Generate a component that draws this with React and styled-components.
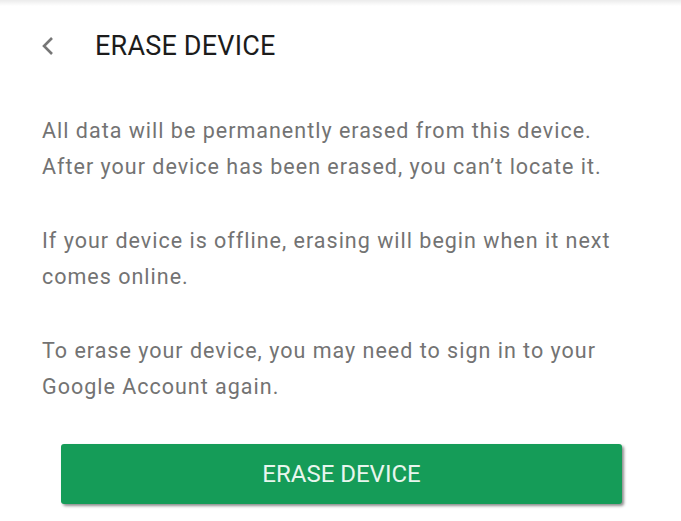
import React from "react";
import styled, { createGlobalStyle } from "styled-components";

const GlobalStyle = createGlobalStyle`
  html, body {
    margin: 0;
    padding: 0;
    background: #ffffff;
    font-family: Roboto, "Noto Sans", "Liberation Sans", sans-serif;
  }
`;

const Screen = styled.div`
  width: 681px;
  height: 521px;
  overflow: hidden;
  background: #ffffff;
  display: flex;
  flex-direction: column;
`;

const TopShade = styled.div`
  height: 6px;
  flex-shrink: 0;
  background: linear-gradient(to bottom, rgba(0, 0, 0, 0.08), rgba(0, 0, 0, 0));
`;

const Header = styled.header`
  height: 80px;
  display: flex;
  align-items: center;
  gap: 39px;
  padding-left: 40px;
`;

const BackButton = styled.button`
  width: 16px;
  height: 20px;
  padding: 0;
  border: none;
  background: none;
  display: flex;
  align-items: center;
  justify-content: center;
  cursor: pointer;
`;

const Title = styled.h1`
  margin: 0;
  font-size: 27px;
  font-weight: 400;
  letter-spacing: 0.2px;
  color: #1c1c1c;
`;

const Content = styled.main`
  display: flex;
  flex-direction: column;
  gap: 38px;
  padding: 27px 42px 0;
`;

const Paragraph = styled.p`
  margin: 0;
  font-size: 21.5px;
  line-height: 36px;
  letter-spacing: 1px;
  color: #737373;
  white-space: nowrap;
`;

const EraseButton = styled.button`
  margin: 1px 17px 0 19px;
  height: 60px;
  border: none;
  border-radius: 3px;
  background: #159c58;
  color: #e8f6ee;
  font-family: inherit;
  font-size: 24px;
  font-weight: 400;
  box-shadow: 2px 2px 3px rgba(0, 0, 0, 0.45);
  cursor: pointer;
`;

function ChevronLeft() {
  return (
    <svg width="16" height="20" viewBox="0 0 16 20">
      <polyline
        points="12,2 4,10 12,18"
        fill="none"
        stroke="#767676"
        strokeWidth="2.6"
      />
    </svg>
  );
}

export default function App() {
  return (
    <Screen>
      <GlobalStyle />
      <TopShade />
      <Header>
        <BackButton aria-label="Back">
          <ChevronLeft />
        </BackButton>
        <Title>ERASE DEVICE</Title>
      </Header>
      <Content>
        <Paragraph>
          All data will be permanently erased from this device.
          <br />
          After your device has been erased, you can’t locate it.
        </Paragraph>
        <Paragraph>
          If your device is offline, erasing will begin when it next
          <br />
          comes online.
        </Paragraph>
        <Paragraph>
          To erase your device, you may need to sign in to your
          <br />
          Google Account again.
        </Paragraph>
        <EraseButton>ERASE DEVICE</EraseButton>
      </Content>
    </Screen>
  );
}
